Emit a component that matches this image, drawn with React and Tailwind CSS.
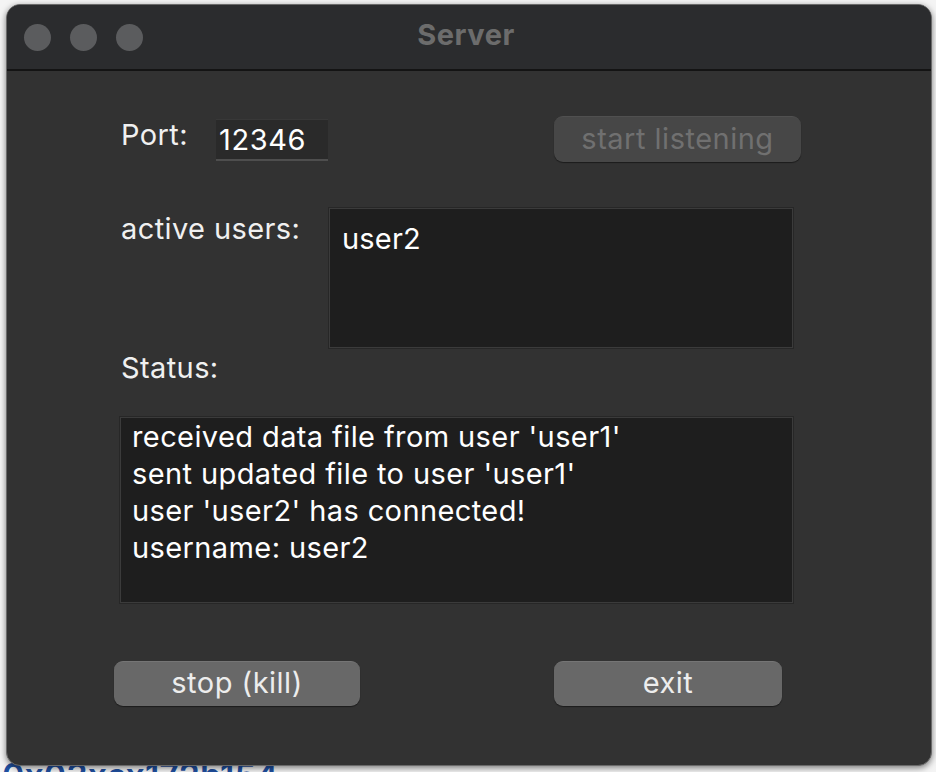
import React from 'react';

const font = { fontFamily: 'Inter, "Noto Sans", sans-serif' };

// --- Title bar ---
function TitleBar() {
  return (
    <div className="grid grid-cols-[1fr_auto_1fr] items-center h-[66px] bg-[#2b2c2e] border-b-2 border-[#141414]">
      <div className="flex items-center gap-[19px] pl-[17px]">
        <span className="w-[27px] h-[27px] rounded-full bg-[#5b5c5e]" />
        <span className="w-[27px] h-[27px] rounded-full bg-[#5b5c5e]" />
        <span className="w-[27px] h-[27px] rounded-full bg-[#5b5c5e]" />
      </div>
      <div className="text-[29px] font-bold text-[#6c6c6c] tracking-[0.5px] pb-[4px] pr-[6px]">Server</div>
      <div />
    </div>
  );
}

// --- Buttons ---
function Button({ children, disabled, className = '' }) {
  return (
    <button
      className={
        'flex items-center justify-center rounded-[9px] text-[29px] tracking-[0.5px] leading-none pb-[3px] shadow-[0_1px_1px_rgba(0,0,0,0.45)] ' +
        (disabled
          ? 'bg-[#474747] text-[#707070] border-t border-[#505050] '
          : 'bg-[#686868] text-[#ededed] border-t border-[#757575] ') +
        className
      }
    >
      {children}
    </button>
  );
}

const statusLines = [
  "received data file from user 'user1'",
  "sent updated file to user 'user1'",
  "user 'user2' has connected!",
  'username: user2',
];

export default function App() {
  return (
    <div className="h-[772px] w-[936px] overflow-hidden bg-[#f4f4f4] pt-[4px] pl-[6px]" style={font}>
      <div className="relative z-10 w-[926px] h-[762px] rounded-[14px] overflow-hidden bg-[#323232] border border-[#6a6a6a] shadow-[0_2px_6px_rgba(0,0,0,0.5)]">
        <TitleBar />

        <div className="flex flex-col pl-[107px] text-[#f0f0f0] text-[29px] tracking-[0.4px] leading-[34px]">
          {/* port row */}
          <div className="flex items-start mt-[45px]">
            <div className="ml-[7px] w-[95px] mt-[2px]">Port:</div>
            <div className="w-[112px] h-[42px] mt-[3px] bg-[#2a2a2a] border-t border-[#383838] border-b-2 border-b-[#4e4e4e] pl-[3px] pt-[3px] text-[29px] tracking-[0.6px] text-white">
              12346
            </div>
            <Button disabled className="ml-[226px] w-[247px] h-[46px]">
              start listening
            </Button>
          </div>

          {/* active users */}
          <div className="flex items-start mt-[46px]">
            <div className="ml-[7px] w-[208px] mt-[4px]">active users:</div>
            <div className="w-[464px] h-[140px] bg-[#1e1e1e] border border-[#3b3b3b] shadow-[0_0_0_1px_#272727] pl-[12px] pt-[13px] text-white tracking-[0.2px]">
              user2
            </div>
          </div>

          <div className="ml-[7px] mt-[3px]">Status:</div>

          {/* status log */}
          <div className="ml-[6px] mt-[32px] w-[673px] h-[186px] bg-[#1e1e1e] border border-[#3b3b3b] shadow-[0_0_0_1px_#272727] pl-[11px] text-white leading-[37px]">
            {statusLines.map((line) => (
              <div key={line}>{line}</div>
            ))}
          </div>

          <div className="flex mt-[58px]">
            <Button className="w-[246px] h-[45px]">stop (kill)</Button>
            <Button className="ml-[194px] w-[228px] h-[45px]">exit</Button>
          </div>
        </div>
      </div>
      <div className="-mt-[7px] -ml-[4px] text-[34px] leading-none font-semibold text-[#1f4fa0]">0x03xcx172b154</div>
    </div>
  );
}
